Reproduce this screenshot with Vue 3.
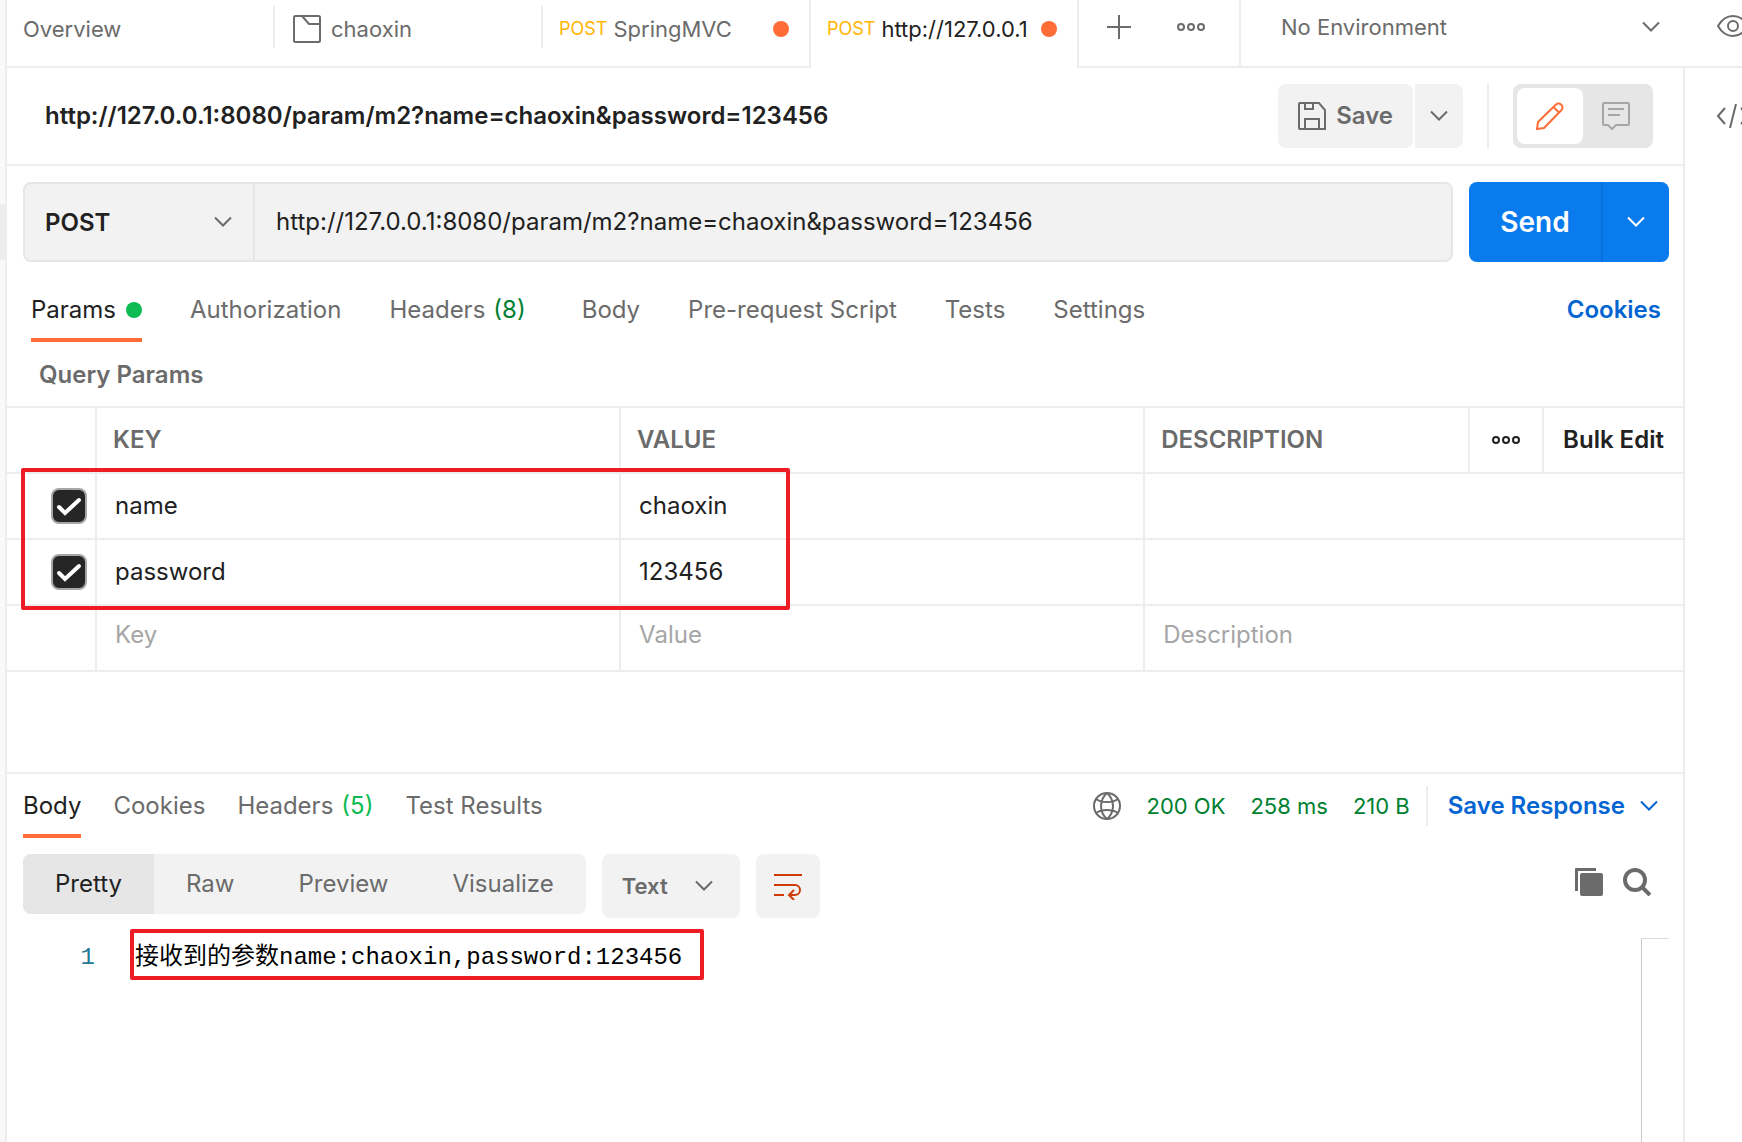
<template>
  <div class="app">
    <div class="left-rail"><div class="left-handle"></div></div>
    <div class="window">
      <header class="top-bar">
        <nav class="tabs">
          <button
            v-for="tab in tabs"
            :key="tab.title"
            class="tab"
            :class="{ active: tab.title === activeTab, sealed: tab.sealed }"
            @click="activeTab = tab.title"
          >
            <svg v-if="tab.folder" class="folder" width="28" height="28" viewBox="0 0 28 28">
              <path d="M2.5 1h23A1.5 1.5 0 0 1 27 2.500v23a1.500 1.500 0 0 1-1.500 1.500h-23A1.500 1.500 0 0 1 1 25.500v-23A1.500 1.500 0 0 1 2.500 1zM9 1l7 8h11" />
            </svg>
            <span v-if="tab.method" class="tab-method">{{ tab.method }}</span>
            <span class="tab-title">{{ tab.title }}</span>
            <span v-if="tab.unsaved" class="unsaved"></span>
          </button>
        </nav>
        <div class="tab-actions">
          <button aria-label="New tab">
            <svg width="24" height="24" viewBox="0 0 24 24"><path d="M12 0v24M0 12h24" /></svg>
          </button>
          <button aria-label="Tab options">
            <Dots />
          </button>
        </div>
        <div class="environment">
          <select v-model="environment" aria-label="Environment">
            <option>No Environment</option>
          </select>
          <Chevron />
        </div>
        <div class="rail-cell">
          <button aria-label="Environment quick look">
            <svg width="32" height="24" viewBox="0 0 32 24">
              <path d="M1 12C5 5 10 2 16 2s11 3 15 10c-4 7-9 10-15 10S5 19 1 12z" />
              <circle cx="16" cy="12" r="5" />
            </svg>
          </button>
        </div>
      </header>

      <div class="content">
        <main>
          <section class="title-row">
            <h1>{{ url }}</h1>
            <div class="save-group">
              <button class="save">
                <svg width="28" height="28" viewBox="0 0 28 28">
                  <path d="M2 1h19l6 7v19H2a1 1 0 0 1-1-1V2a1 1 0 0 1 1-1zM7 1v6h8V1M7 27V17h14v10" />
                </svg>
                Save
              </button>
              <button class="save-more" aria-label="Save options"><Chevron /></button>
            </div>
            <div class="title-divider"></div>
            <div class="mode">
              <button class="mode-on" aria-label="Edit">
                <svg width="28" height="28" viewBox="0 0 28 28">
                  <path d="M1 27l1-7L20 2.500a3.500 3.500 0 0 1 5 0l.5.5a3.500 3.500 0 0 1 0 5L8 26zM17.500 5l5.500 5.500" />
                </svg>
              </button>
              <button aria-label="Comments">
                <svg width="28" height="28" viewBox="0 0 28 28">
                  <path d="M2 1h24a1 1 0 0 1 1 1v20a1 1 0 0 1-1 1H14l-4 4-4-4H2a1 1 0 0 1-1-1V2a1 1 0 0 1 1-1zM6 7h16M6 13h12" />
                </svg>
              </button>
            </div>
          </section>

          <section class="request-row">
            <div class="address">
              <div class="method">
                <select v-model="method" aria-label="Method">
                  <option>POST</option>
                  <option>GET</option>
                </select>
                <Chevron />
              </div>
              <input v-model="url" type="text" aria-label="Request URL" />
            </div>
            <div class="send-group">
              <button class="send">Send</button>
              <button class="send-more" aria-label="Send options"><Chevron /></button>
            </div>
          </section>

          <nav class="request-tabs">
            <button
              v-for="tab in requestTabs"
              :key="tab.name"
              :class="{ active: tab.name === requestTab }"
              @click="requestTab = tab.name"
            >
              {{ tab.name }}
              <span v-if="tab.count" class="count">({{ tab.count }})</span>
              <span v-if="tab.dot" class="filled"></span>
            </button>
            <a href="#">Cookies</a>
          </nav>

          <h2>Query Params</h2>
          <div class="params">
            <table>
              <colgroup>
                <col class="col-check" />
                <col class="col-wide" />
                <col class="col-wide" />
                <col />
                <col class="col-more" />
                <col class="col-bulk" />
              </colgroup>
              <thead>
                <tr>
                  <th></th>
                  <th>KEY</th>
                  <th>VALUE</th>
                  <th>DESCRIPTION</th>
                  <th class="center">
                    <button class="columns" aria-label="Columns"><Dots /></button>
                  </th>
                  <th class="center"><button class="bulk">Bulk Edit</button></th>
                </tr>
              </thead>
              <tbody>
                <tr v-for="param in params" :key="param.id">
                  <td>
                    <label class="check">
                      <input v-model="param.enabled" type="checkbox" :aria-label="'Use ' + param.key" />
                      <svg v-if="param.enabled" width="36" height="36" viewBox="0 0 36 36">
                        <path d="M8 19l6 6L28 12" />
                      </svg>
                    </label>
                  </td>
                  <td><input v-model="param.key" type="text" aria-label="Key" /></td>
                  <td><input v-model="param.value" type="text" aria-label="Value" /></td>
                  <td colspan="3"><input v-model="param.description" type="text" aria-label="Description" /></td>
                </tr>
                <tr class="blank">
                  <td></td>
                  <td><input type="text" placeholder="Key" aria-label="New key" /></td>
                  <td><input type="text" placeholder="Value" aria-label="New value" /></td>
                  <td colspan="3"><input type="text" placeholder="Description" aria-label="New description" /></td>
                </tr>
              </tbody>
            </table>
            <div class="highlight"></div>
          </div>

          <section class="response">
            <div class="response-bar">
              <nav class="response-tabs">
                <button
                  v-for="tab in responseTabs"
                  :key="tab.name"
                  :class="{ active: tab.name === responseTab }"
                  @click="responseTab = tab.name"
                >
                  {{ tab.name }}
                  <span v-if="tab.count" class="count">({{ tab.count }})</span>
                </button>
              </nav>
              <div class="status">
                <svg width="28" height="28" viewBox="0 0 28 28">
                  <circle cx="14" cy="14" r="13" />
                  <path d="M14 1c-8 7-8 19 0 26M14 1c8 7 8 19 0 26M3 7c6 4 16 4 22 0M3 21c6-4 16-4 22 0" />
                </svg>
                <span>200 OK</span>
                <span>258 ms</span>
                <span>210 B</span>
              </div>
              <button class="save-response">Save Response <Chevron /></button>
            </div>

            <div class="view-bar">
              <div class="views">
                <button
                  v-for="name in views"
                  :key="name"
                  :class="{ active: name === view }"
                  @click="view = name"
                >
                  {{ name }}
                </button>
              </div>
              <div class="format">
                <select v-model="format" aria-label="Format">
                  <option>Text</option>
                  <option>JSON</option>
                </select>
                <Chevron />
              </div>
              <button class="wrap" aria-label="Wrap lines">
                <svg width="28" height="28" viewBox="0 0 28 28">
                  <path d="M0 3h28M0 13h21a5 5 0 0 1 0 10h-6M0 23h10M20 18l-5 5 5 5" />
                </svg>
              </button>
              <div class="view-tools">
                <button aria-label="Copy">
                  <svg width="28" height="28" viewBox="0 0 28 28">
                    <path class="solid" d="M1 0h20v3H3v20H0V1a1 1 0 0 1 1-1z" />
                    <rect class="solid" x="5" y="5" width="23" height="23" rx="2" />
                  </svg>
                </button>
                <button aria-label="Search">
                  <svg class="thick" width="28" height="28" viewBox="0 0 28 28">
                    <circle cx="12" cy="12" r="10" />
                    <path d="M19 19l8 8" />
                  </svg>
                </button>
              </div>
            </div>

            <div class="editor">
              <span class="line-no">1</span>
              <code>{{ body }}</code>
              <div class="minimap"></div>
            </div>
          </section>
        </main>
        <aside class="rail">
          <button aria-label="Code">
            <svg width="32" height="24" viewBox="0 0 32 24">
              <path d="M8 4L1 12l7 8M19 0l-6 24M24 4l7 8-7 8" />
            </svg>
          </button>
        </aside>
      </div>
    </div>
  </div>
</template>

<script setup>
import { ref, h } from 'vue'

const Chevron = () =>
  h('svg', { class: 'chevron', width: 18, height: 12, viewBox: '0 0 18 12' }, [
    h('path', { d: 'M1 1.5l8 8 8-8' })
  ])

const Dots = () =>
  h(
    'svg',
    { width: 28, height: 10, viewBox: '0 0 28 10' },
    [4, 14, 24].map((cx) => h('circle', { cx, cy: 5, r: 3 }))
  )

const tabs = [
  { title: 'Overview' },
  { title: 'chaoxin', folder: true },
  { title: 'SpringMVC', method: 'POST', unsaved: true, sealed: true },
  { title: 'http://127.0.0.1', method: 'POST', unsaved: true }
]
const activeTab = ref('http://127.0.0.1')
const environment = ref('No Environment')

const method = ref('POST')
const url = ref('http://127.0.0.1:8080/param/m2?name=chaoxin&password=123456')

const requestTabs = [
  { name: 'Params', dot: true },
  { name: 'Authorization' },
  { name: 'Headers', count: 8 },
  { name: 'Body' },
  { name: 'Pre-request Script' },
  { name: 'Tests' },
  { name: 'Settings' }
]
const requestTab = ref('Params')

const params = ref([
  { id: 1, enabled: true, key: 'name', value: 'chaoxin', description: '' },
  { id: 2, enabled: true, key: 'password', value: '123456', description: '' }
])

const responseTabs = [
  { name: 'Body' },
  { name: 'Cookies' },
  { name: 'Headers', count: 5 },
  { name: 'Test Results' }
]
const responseTab = ref('Body')

const views = ['Pretty', 'Raw', 'Preview', 'Visualize']
const view = ref('Pretty')
const format = ref('Text')
const body = '接收到的参数name:chaoxin,password:123456'
</script>

<style>
body {
  margin: 0;
  background: #fff;
}
</style>

<style scoped>
.app {
  display: flex;
  min-height: 100vh;
  overflow: hidden;
  font-family: Inter, 'Noto Sans CJK SC', sans-serif;
  font-size: 24px;
  line-height: 32px;
  color: #212121;
}

.app * {
  box-sizing: border-box;
}

button,
select,
input {
  margin: 0;
  padding: 0;
  border: none;
  outline: none;
  background: none;
  font: inherit;
  color: inherit;
  appearance: none;
}

button,
select {
  cursor: pointer;
}

svg {
  display: block;
  flex: none;
  fill: none;
  stroke: #6b6b6b;
  stroke-width: 2;
}

.solid {
  fill: #6b6b6b;
  stroke: none;
}

.thick {
  stroke-width: 4;
}

.left-rail {
  width: 7px;
  flex: none;
  padding-top: 204px;
  background: #f9f9f9;
  border-right: 2px solid #ededed;
}

.left-handle {
  height: 56px;
  background: #ededed;
}

.window {
  flex: 1;
  min-width: 0;
  display: flex;
  flex-direction: column;
}

/* top bar */
.top-bar {
  display: flex;
  height: 68px;
  font-size: 22px;
  color: #6b6b6b;
}

.tabs {
  display: flex;
}

.tab {
  display: flex;
  align-items: center;
  position: relative;
  width: 268px;
  padding: 0 20px 8px 16px;
  border-bottom: 2px solid #ededed;
}

.tab::after {
  content: '';
  position: absolute;
  right: 0;
  top: 6px;
  width: 2px;
  height: 42px;
  background: #ededed;
}

.tab.active,
.tab.sealed {
  border-right: 2px solid #ededed;
}

.tab.active {
  border-bottom: none;
  padding-bottom: 10px;
  color: #212121;
}

.tab.active::after,
.tab.sealed::after {
  display: none;
}

.folder {
  margin: 0 10px 0 2px;
}

.tab-method {
  margin-right: 6px;
  font-size: 18px;
  color: #ffb400;
}

.unsaved,
.filled {
  width: 16px;
  height: 16px;
  border-radius: 50%;
  background: #ff6c37;
}

.unsaved {
  margin-left: auto;
}

.tab-actions {
  display: flex;
  align-items: center;
  gap: 46px;
  width: 162px;
  padding: 0 34px 12px 28px;
  border-right: 2px solid #ededed;
  border-bottom: 2px solid #ededed;
}

.environment {
  flex: 1;
  display: grid;
  align-items: center;
  padding-bottom: 12px;
  border-bottom: 2px solid #ededed;
}

.environment select,
.environment .chevron {
  grid-area: 1 / 1;
}

.environment select {
  width: 100%;
  padding-left: 40px;
}

.chevron {
  pointer-events: none;
}

.environment .chevron {
  justify-self: end;
  margin-right: 23px;
}

.rail-cell {
  width: 59px;
  padding: 14px 0 0 34px;
  border-bottom: 2px solid #ededed;
}

.content {
  flex: 1;
  display: flex;
}

main {
  flex: 1;
  min-width: 0;
  display: flex;
  flex-direction: column;
}

.rail {
  width: 59px;
  flex: none;
  padding: 36px 0 0 32px;
  border-left: 2px solid #ededed;
}

/* title */
.title-row {
  display: flex;
  align-items: center;
  height: 98px;
  padding: 0 30px 0 38px;
  border-bottom: 2px solid #ededed;
}

h1 {
  flex: 1;
  margin: 0;
  font-size: 24px;
  font-weight: 600;
}

.save-group {
  display: flex;
  gap: 2px;
  height: 64px;
  font-weight: 600;
  color: #6b6b6b;
}

.save-group button {
  display: flex;
  align-items: center;
  background: #f2f2f2;
}

.save {
  gap: 10px;
  padding: 0 20px;
  border-radius: 8px;
}

.save-more {
  padding: 0 15px;
  border-radius: 0 8px 8px 0;
}

.title-divider {
  width: 2px;
  height: 64px;
  margin: 0 24px;
  background: #ededed;
}

.mode {
  display: flex;
  padding: 4px;
  border-radius: 8px;
  background: #e6e6e6;
}

.mode button {
  display: flex;
  align-items: center;
  justify-content: center;
  width: 66px;
  height: 56px;
  border-radius: 8px;
}

.mode svg {
  stroke: #a6a6a6;
}

.mode .mode-on {
  background: #fff;
}

.mode .mode-on svg {
  stroke: #ff6c37;
}

/* url */
.request-row {
  display: flex;
  gap: 16px;
  height: 96px;
  padding: 16px 14px 0 16px;
}

.address {
  flex: 1;
  display: flex;
  border: 2px solid #e6e6e6;
  border-radius: 8px;
  background: #f2f2f2;
}

.method {
  display: grid;
  align-items: center;
  width: 230px;
  border-right: 2px solid #e6e6e6;
  font-weight: 600;
}

.method select,
.method .chevron {
  grid-area: 1 / 1;
}

.method select {
  width: 100%;
  padding: 2px 0 0 20px;
}

.method .chevron {
  justify-self: end;
  margin-right: 21px;
}

.address input {
  flex: 1;
  min-width: 0;
  padding: 0 21px;
}

.send-group {
  display: flex;
  border-radius: 8px;
  background: #097bed;
  color: #fff;
}

.send {
  width: 134px;
  border-right: 2px solid #0770dc;
  font-size: 28px;
  font-weight: 600;
}

.send-more {
  display: flex;
  align-items: center;
  padding: 0 24px;
}

.send-more svg {
  stroke: #fff;
}

/* request tabs */
.request-tabs {
  display: flex;
  gap: 48px;
  height: 80px;
  padding: 16px 22px 0 24px;
  align-items: flex-start;
}

.request-tabs button,
.response-tabs button {
  display: flex;
  align-items: center;
  gap: 8px;
  padding: 16px 0 12px;
  border-bottom: 4px solid transparent;
  color: #6b6b6b;
}

.request-tabs .active,
.response-tabs .active {
  border-color: #ff6c37;
  color: #212121;
}

.request-tabs .filled {
  margin-left: 2px;
  background: #0cbb52;
}

.request-tabs .count {
  margin-right: 8px;
  color: #007f31;
}

.request-tabs a {
  margin-left: auto;
  padding-top: 16px;
  font-weight: 600;
  color: #0265d2;
  text-decoration: none;
}

h2 {
  margin: 0;
  padding: 17px 32px 15px;
  font-size: 24px;
  font-weight: 600;
  color: #6b6b6b;
}

/* params table */
.params {
  position: relative;
}

table {
  width: 100%;
  table-layout: fixed;
  border-collapse: separate;
  border-spacing: 0;
  border-top: 2px solid #ededed;
}

.col-check {
  width: 90px;
}

.col-wide {
  width: 31.27%;
}

.col-more {
  width: 74px;
}

.col-bulk {
  width: 139px;
}

th,
td {
  height: 66px;
  padding: 0;
  border-right: 2px solid #ededed;
  border-bottom: 2px solid #ededed;
}

th:last-child,
td:last-child {
  border-right: none;
}

th {
  padding-left: 16px;
  font-weight: 600;
  text-align: left;
  color: #6b6b6b;
}

th.center {
  padding: 0;
  text-align: center;
}

th svg {
  stroke: #212121;
}

.columns {
  display: block;
  margin: 0 auto;
}

.bulk {
  color: #212121;
}

td input[type='text'] {
  display: block;
  width: 100%;
  height: 64px;
  padding: 0 18px 2px;
}

.blank input[type='text'] {
  padding-bottom: 8px;
}

input::placeholder {
  color: #a6a6a6;
  opacity: 1;
}

.check {
  display: grid;
  width: 36px;
  margin-left: 44px;
}

.check input,
.check svg {
  grid-area: 1 / 1;
}

.check input {
  width: 36px;
  height: 36px;
  border: 2px solid #a6a6a6;
  border-radius: 8px;
}

.check input:checked {
  background: #262626;
}

.check svg {
  stroke: #fff;
  stroke-width: 4;
  stroke-linecap: round;
  pointer-events: none;
}

.highlight {
  position: absolute;
  left: 14px;
  top: 62px;
  width: 769px;
  height: 142px;
  border: 4px solid #ee1c25;
  border-radius: 2px;
  pointer-events: none;
}

/* response */
.response {
  flex: 1;
  display: flex;
  flex-direction: column;
  margin-top: 100px;
  padding: 0 14px 0 16px;
  border-top: 2px solid #ededed;
}

.response-bar {
  display: flex;
  height: 80px;
  margin: 0 -14px 0 0;
  align-items: flex-start;
}

.response-tabs {
  display: flex;
  gap: 32px;
}

.response-tabs .count {
  color: #0cbb52;
}

.status {
  display: flex;
  align-items: center;
  gap: 25px;
  height: 40px;
  margin: 12px 0 0 auto;
  padding-right: 16px;
  border-right: 2px solid #ededed;
  font-size: 22px;
  color: #007f31;
}

.save-response {
  display: flex;
  align-items: center;
  gap: 15px;
  padding: 16px 25px 0 20px;
  font-weight: 600;
  color: #0265d2;
}

.save-response svg {
  stroke: #0265d2;
}

.view-bar {
  display: flex;
  align-items: flex-start;
  gap: 16px;
}

.views {
  display: flex;
  border-radius: 8px;
  background: #f2f2f2;
  overflow: hidden;
}

.views button {
  height: 60px;
  padding: 0 32px;
  color: #6b6b6b;
}

.views .active {
  background: #e6e6e6;
  color: #212121;
}

.format {
  display: grid;
  align-items: center;
  width: 138px;
  height: 64px;
  border-radius: 8px;
  background: #f2f2f2;
  font-size: 22px;
  font-weight: 600;
  color: #6b6b6b;
}

.format select,
.format .chevron {
  grid-area: 1 / 1;
}

.format select {
  width: 100%;
  padding-left: 20px;
}

.format .chevron {
  justify-self: end;
  margin-right: 27px;
}

.wrap {
  padding: 18px;
  border-radius: 8px;
  background: #f2f2f2;
}

.wrap svg {
  stroke: #d13b0a;
}

.view-tools {
  display: flex;
  gap: 20px;
  margin-left: auto;
  padding: 14px 18px 0 0;
}

.editor {
  flex: 1;
  display: flex;
  align-items: flex-start;
  padding-top: 11px;
  font-family: 'Liberation Mono', 'Noto Sans CJK SC', monospace;
}

.line-no {
  width: 72px;
  padding-top: 13px;
  text-align: right;
  color: #237893;
}

code {
  margin-left: 35px;
  padding: 9px 18px 2px 1px;
  border: 4px solid #ee1c25;
  border-radius: 2px;
  font-family: inherit;
  color: #000;
}

.minimap {
  align-self: stretch;
  width: 28px;
  margin: 9px 0 0 auto;
  border-top: 1px solid #ddd;
  border-left: 1px solid #ccc;
}
</style>
